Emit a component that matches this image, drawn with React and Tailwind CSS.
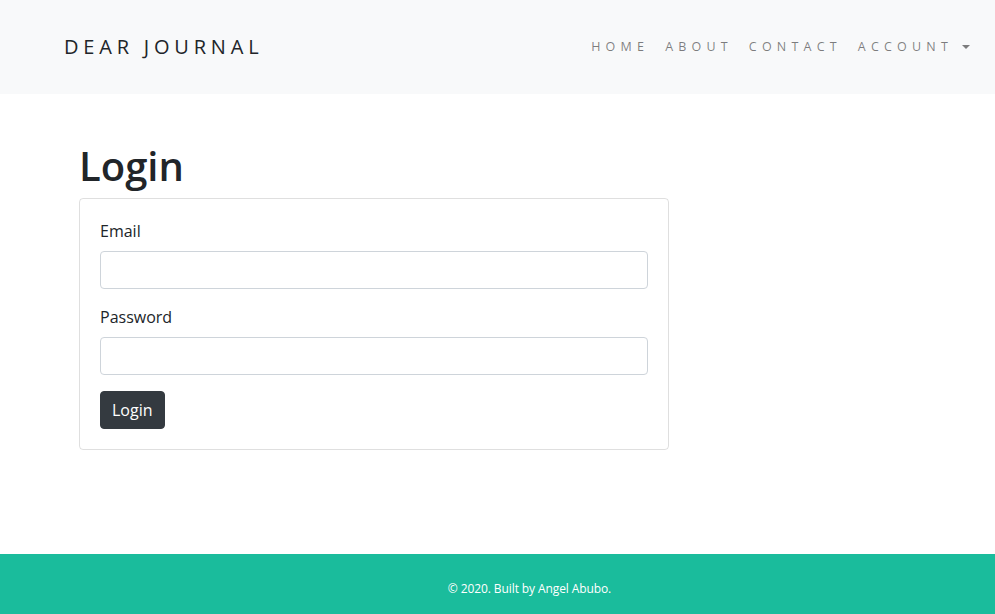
import { useState } from 'react';

const links = ['HOME', 'ABOUT', 'CONTACT'];

const Navbar = () => (
  <nav className="h-[94px] bg-[#f8f9fa] flex items-center justify-between pl-[64px] pr-[25px]">
    <a href="#" className="text-[20px] tracking-[4.8px] text-[#212529]">
      DEAR JOURNAL
    </a>
    <ul className="flex items-center">
      {links.map((link) => (
        <li key={link}>
          <a href="#" className="block px-[8px] text-[12.5px] tracking-[5.2px] text-[rgba(0,0,0,0.5)]">
            {link}
          </a>
        </li>
      ))}
      <li>
        <a href="#" className="flex items-center pl-[8px] text-[12.5px] tracking-[5.2px] text-[rgba(0,0,0,0.5)]">
          ACCOUNT
          <span className="ml-[9px] w-0 h-0 border-x-[4px] border-x-transparent border-t-[4px] border-t-[rgba(0,0,0,0.5)]"></span>
        </a>
      </li>
    </ul>
  </nav>
);

const LoginCard = () => {
  const [email, setEmail] = useState('');
  const [password, setPassword] = useState('');

  return (
    <div className="w-[590px] border border-[rgba(0,0,0,0.125)] rounded-[4px] p-[20px]">
      <div className="mb-[16px]">
        <label className="block mb-[8px] text-[16px] leading-[24px] text-[#212529]">Email</label>
        <input
          type="email"
          value={email}
          onChange={(e) => setEmail(e.target.value)}
          className="block w-full h-[38px] px-[12px] border border-[#ced4da] rounded-[4px] outline-none"
        />
      </div>
      <div className="mb-[16px]">
        <label className="block mb-[8px] text-[16px] leading-[24px] text-[#212529]">Password</label>
        <input
          type="password"
          value={password}
          onChange={(e) => setPassword(e.target.value)}
          className="block w-full h-[38px] px-[12px] border border-[#ced4da] rounded-[4px] outline-none"
        />
      </div>
      <button className="h-[38px] px-[11px] bg-[#343a40] text-white text-[16px] leading-[24px] rounded-[4px] border border-[#343a40]">
        Login
      </button>
    </div>
  );
};

export default function App() {
  return (
    <div className="min-h-screen flex flex-col bg-white font-['Open_Sans',sans-serif] text-[#212529]">
      <Navbar />
      <main className="flex-1 pt-[48px] px-[79px]">
        <h1 className="text-[40px] leading-[48px] font-semibold mb-[8px]">Login</h1>
        <LoginCard />
      </main>
      {/* Footer */}
      <footer className="h-[60px] bg-[#1abc9c] flex items-center justify-center pt-[10px] pl-[64px]">
        <p className="text-[12px] tracking-[-0.1px] text-white">© 2020. Built by Angel Abubo.</p>
      </footer>
    </div>
  );
}
